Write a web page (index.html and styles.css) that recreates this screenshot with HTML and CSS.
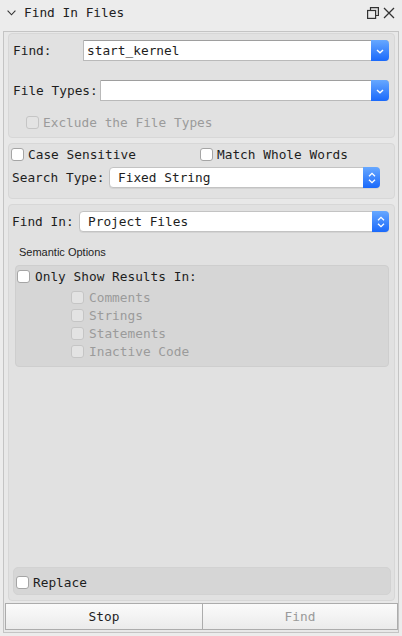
FILE: index.html
```html
<!DOCTYPE html>
<html>
<head>
<meta charset="utf-8">
<link rel="stylesheet" href="styles.css">
</head>
<body>
<div class="titlebar">
  <svg class="chev" width="9" height="6" viewBox="0 0 9 6"><path d="M0.6 0.6 L4.5 4.8 L8.4 0.6" fill="none" stroke="#333" stroke-width="1.1"/></svg>
  <span class="title">Find In Files</span>
  <span class="spacer"></span>
  <svg class="ticon" width="12" height="12" viewBox="0 0 12 12"><path d="M3.5 3 V0.6 H11.4 V8.5 H9" fill="none" stroke="#333" stroke-width="1.2"/><rect x="0.6" y="3.5" width="8" height="7.9" fill="none" stroke="#333" stroke-width="1.2"/></svg>
  <svg class="ticon close" width="12" height="12" viewBox="0 0 12 12"><path d="M1 1 L11 11 M11 1 L1 11" fill="none" stroke="#333" stroke-width="1.3"/></svg>
</div>
<div class="frame">
  <div class="group g1">
    <div class="row r-find">
      <span class="lbl w-find">Find:</span>
      <div class="combo"><span class="combo-text">start_kernel</span><span class="combo-btn"><svg width="8" height="5" viewBox="0 0 8 5"><path d="M1 1 L4 3.8 L7 1" fill="none" stroke="#fff" stroke-width="1.4"/></svg></span></div>
    </div>
    <div class="row r-types">
      <span class="lbl w-types">File Types:</span>
      <div class="combo"><span class="combo-text"></span><span class="combo-btn"><svg width="8" height="5" viewBox="0 0 8 5"><path d="M1 1 L4 3.8 L7 1" fill="none" stroke="#fff" stroke-width="1.4"/></svg></span></div>
    </div>
    <div class="row r-exclude">
      <span class="cb disabled"></span><span class="cb-lbl dim">Exclude the File Types</span>
    </div>
  </div>

  <div class="group g2">
    <div class="row r-checks">
      <div class="chk-item first"><span class="cb"></span><span class="cb-lbl">Case Sensitive</span></div>
      <div class="chk-item"><span class="cb"></span><span class="cb-lbl">Match Whole Words</span></div>
    </div>
    <div class="row r-stype">
      <span class="lbl w-stype">Search Type:</span>
      <div class="select sel-stype"><span class="sel-text">Fixed String</span><span class="stepper"><svg width="8" height="12" viewBox="0 0 8 12"><path d="M1 4.2 L4 1.3 L7 4.2 M1 7.8 L4 10.7 L7 7.8" fill="none" stroke="#fff" stroke-width="1.3"/></svg></span></div>
    </div>
  </div>

  <div class="group g3">
    <div class="row r-findin">
      <span class="lbl w-findin">Find In:</span>
      <div class="select sel-findin"><span class="sel-text">Project Files</span><span class="stepper"><svg width="8" height="12" viewBox="0 0 8 12"><path d="M1 4.2 L4 1.3 L7 4.2 M1 7.8 L4 10.7 L7 7.8" fill="none" stroke="#fff" stroke-width="1.3"/></svg></span></div>
    </div>
    <div class="sem-title">Semantic Options</div>
    <div class="sem-box">
      <div class="row r-only"><span class="cb"></span><span class="cb-lbl">Only Show Results In:</span></div>
      <div class="sub-list">
        <div class="sub-row"><span class="cb disabled"></span><span class="cb-lbl dim">Comments</span></div>
        <div class="sub-row"><span class="cb disabled"></span><span class="cb-lbl dim">Strings</span></div>
        <div class="sub-row"><span class="cb disabled"></span><span class="cb-lbl dim">Statements</span></div>
        <div class="sub-row"><span class="cb disabled"></span><span class="cb-lbl dim">Inactive Code</span></div>
      </div>
    </div>
    <div class="replace-box">
      <span class="cb"></span><span class="cb-lbl">Replace</span>
    </div>
  </div>

  <div class="buttons">
    <div class="btn stop">Stop</div>
    <div class="btn find">Find</div>
  </div>
</div>
</body>
</html>
```
FILE: styles.css
```css
* { box-sizing: border-box; }
html, body {
  margin: 0;
  padding: 0;
}
body {
  width: 402px;
  height: 636px;
  overflow: hidden;
  background: #ececec;
  font-family: "DejaVu Sans Mono", "Liberation Mono", monospace;
  font-size: 12.8px;
  color: #1e1e1e;
}

/* title bar */
.titlebar {
  height: 24px;
  display: flex;
  align-items: center;
  padding: 0 7px 0 7px;
}
.chev { margin-right: 8px; margin-top: 1px; }
.title { color: #222; }
.spacer { flex: 1; }
.ticon { display: block; margin-top: 1px; }
.close { margin-left: 4px; }

/* main frame */
.frame {
  margin: 7px 3px 0 3px;
  height: 602px;
  border: 1px solid #c4c4c4;
  background: #e8e8e8;
  display: flex;
  flex-direction: column;
  padding-top: 1px;
}

.group {
  margin: 0 3px 0 4px;
  background: #e1e1e1;
  border: 1px solid #d7d7d7;
  border-radius: 4px;
}
.g1 { height: 105px; padding: 6px 5px 0 4px; }
.g2 { height: 56px; margin-top: 5px; padding: 4px 5px 0 2px; }
.g3 { flex: 1; margin-top: 5px; padding: 6px 5px 5px 0; display: flex; flex-direction: column; }

.row { display: flex; align-items: center; }
.lbl { flex: none; white-space: nowrap; }
.w-find { width: 70px; }
.w-types { width: 87px; }
.w-stype { width: 97px; margin-left: 1px; }
.w-findin { width: 67px; margin-left: 3px; }

/* combo box with blue drop button */
.combo {
  flex: 1;
  height: 21px;
  display: flex;
  background: #fff;
  border: 1px solid #b9b9b9;
  border-top-color: #9e9e9e;
  border-right: none;
  border-radius: 0 4px 4px 0;
}
.combo-text { flex: 1; padding-left: 3px; line-height: 19px; }
.combo-btn {
  width: 18px;
  margin: -1px 0 -1px 0;
  border-radius: 0 4px 4px 0;
  background: linear-gradient(#67a8ff, #1a69fb);
  display: flex;
  align-items: center;
  justify-content: center;
}
.combo-btn svg { margin-top: 1px; }
.r-types { margin-top: 19px; }
.r-exclude { margin-top: 15px; height: 13px; padding-left: 13px; }

/* checkboxes */
.cb {
  flex: none;
  width: 13px;
  height: 13px;
  border: 1px solid #a5a5a5;
  border-radius: 3px;
  background: #fff;
}
.cb.disabled {
  background: #e3e3e3;
  border-color: #c5c5c5;
}
.cb-lbl { margin-left: 4px; white-space: nowrap; }
.dim { color: #9b9b9b; }

.r-checks { height: 13px; }
.chk-item { display: flex; align-items: center; }
.chk-item.first { width: 189px; }
.r-stype { margin-top: 6px; }

/* select with stepper */
.select {
  height: 21px;
  display: flex;
  background: #fff;
  border: 1px solid #c3c3c3;
  border-radius: 4px;
  box-shadow: 0 1px 0 rgba(0,0,0,0.06);
}
.sel-stype { width: 271px; }
.sel-findin { flex: 1; }
.sel-text { flex: 1; padding-left: 8px; line-height: 19px; }
.stepper {
  width: 17px;
  margin: -1px -1px -1px 0;
  border-radius: 0 4px 4px 0;
  background: linear-gradient(#67a8ff, #1a69fb);
  display: flex;
  align-items: center;
  justify-content: center;
}

.sem-title {
  margin: 14px 0 0 10px;
  height: 13px;
  line-height: 13px;
  font-family: "Liberation Sans", Arial, sans-serif;
  font-size: 11px;
  color: #1e1e1e;
}
.sem-box {
  margin: 6px 0 0 6px;
  width: 374px;
  height: 102px;
  background: #d6d6d6;
  border: 1px solid #cecece;
  border-radius: 4px;
  padding: 4px 0 0 1px;
}
.r-only { height: 13px; }
.r-only .cb-lbl { margin-left: 5px; }
.sub-list { margin-top: 5px; padding-left: 54px; }
.sub-row { height: 18px; display: flex; align-items: center; }
.sub-row .cb-lbl { margin-left: 5px; }

.replace-box {
  margin: auto 0 0 4px;
  width: 378px;
  height: 28px;
  background: #d6d6d6;
  border: 1px solid #d2d2d2;
  border-radius: 5px;
  display: flex;
  align-items: center;
  padding: 3px 0 0 2px;
}

/* bottom buttons */
.buttons {
  display: flex;
  margin: 2px 0 2px 1px;
  width: 393px;
  height: 27px;
  flex: none;
}
.btn {
  height: 27px;
  display: flex;
  align-items: center;
  justify-content: center;
  border: 1px solid #acacac;
  background: linear-gradient(#fbfbfb, #ebebeb);
}
.stop { width: 198px; color: #1e1e1e; }
.find { flex: 1; border-left: none; color: #9a9a9a; }
```
